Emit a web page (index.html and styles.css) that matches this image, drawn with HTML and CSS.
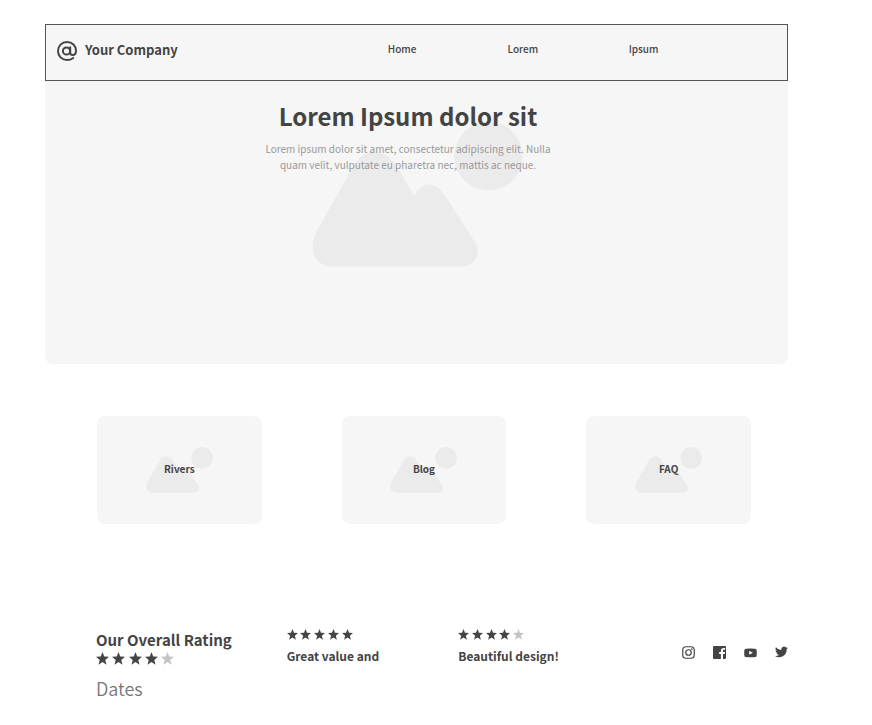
FILE: index.html
```html
<!DOCTYPE html>
<html lang="en">
<head>
<meta charset="utf-8">
<title>Your Company</title>
<link rel="stylesheet" href="styles.css">
</head>
<body>
<svg class="sprite" aria-hidden="true">
  <symbol id="landscape" viewBox="0 0 210 144">
    <circle cx="176" cy="34" r="34"/>
    <path d="M4 111 39 49C45 38 50 30 62 30C74 30 79 35 86 46L102 73C107 66 110 62 117 62C124 62 128 66 134 75L161 117C165 123 166 127 165 132C163 139 158 143 149 143.500H21C4 143 -3 128 4 111Z"/>
  </symbol>
  <symbol id="star" viewBox="0 0 24 24">
    <path d="M12 0l3.200 8.400 8.800.5-6.900 5.700 2.300 9L12 18.600l-7.400 5 2.300-9L0 8.900l8.800-.5z"/>
  </symbol>
</svg>
<div class="page">
  <section class="hero">
    <svg class="picture picture-large" aria-hidden="true"><use href="#landscape"/></svg>
    <header class="header">
      <a class="brand" href="#">
        <svg class="brand-icon" viewBox="0 0 20 20" aria-hidden="true">
          <circle cx="9.500" cy="10" r="3.600"/>
          <path d="M13.200 6.200v5.300c0 1.700 1 2.500 2.400 2.500 2 0 3.400-1.700 3.400-4.300C19 4.700 15.200 1 10 1S1 4.900 1 10s3.900 9 9 9c2.400 0 4.500-.7 6.200-2.100"/>
        </svg>
        <span>Your Company</span>
      </a>
      <nav class="nav">
        <a href="#">Home</a>
        <a href="#">Lorem</a>
        <a href="#">Ipsum</a>
      </nav>
    </header>
    <div class="intro">
      <h1>Lorem Ipsum dolor sit</h1>
      <p>Lorem ipsum dolor sit amet, consectetur adipiscing elit. Nulla<br>quam velit, vulputate eu pharetra nec, mattis ac neque.</p>
    </div>
  </section>

  <section class="cards">
    <a class="card" href="#"><svg class="picture picture-small" aria-hidden="true"><use href="#landscape"/></svg><span>Rivers</span></a>
    <a class="card" href="#"><svg class="picture picture-small" aria-hidden="true"><use href="#landscape"/></svg><span>Blog</span></a>
    <a class="card" href="#"><svg class="picture picture-small" aria-hidden="true"><use href="#landscape"/></svg><span>FAQ</span></a>
  </section>

  <footer class="footer">
    <div class="overall">
      <h2>Our Overall Rating</h2>
      <div class="stars stars-large" role="img" aria-label="4 out of 5 stars">
        <svg><use href="#star"/></svg><svg><use href="#star"/></svg><svg><use href="#star"/></svg><svg><use href="#star"/></svg><svg class="off"><use href="#star"/></svg>
      </div>
      <p class="dates">Dates</p>
    </div>
    <div class="review">
      <div class="stars" role="img" aria-label="5 out of 5 stars">
        <svg><use href="#star"/></svg><svg><use href="#star"/></svg><svg><use href="#star"/></svg><svg><use href="#star"/></svg><svg><use href="#star"/></svg>
      </div>
      <h3>Great value and</h3>
    </div>
    <div class="review">
      <div class="stars" role="img" aria-label="4 out of 5 stars">
        <svg><use href="#star"/></svg><svg><use href="#star"/></svg><svg><use href="#star"/></svg><svg><use href="#star"/></svg><svg class="off"><use href="#star"/></svg>
      </div>
      <h3>Beautiful design!</h3>
    </div>
    <div class="social">
      <a href="#" aria-label="Instagram"><svg viewBox="0 0 26 26"><rect x="1.500" y="1.500" width="23" height="23" rx="6.500" fill="none" stroke="currentColor" stroke-width="2.400"/><circle cx="13" cy="13" r="5.500" fill="none" stroke="currentColor" stroke-width="2.400"/><circle cx="19.700" cy="6.300" r="1.600"/></svg></a>
      <a href="#" aria-label="Facebook"><svg viewBox="0 0 26 26"><path d="M2 0h22a2 2 0 0 1 2 2v22a2 2 0 0 1-2 2h-4V16h3.500l.5-4h-4V9.500c0-1.200.4-2 2-2h2.200V4c-.4 0-1.700-.2-3.200-.2-3.100 0-5.200 1.900-5.200 5.400V12h-3.500v4h3.500v10H2a2 2 0 0 1-2-2V2a2 2 0 0 1 2-2z"/></svg></a>
      <a href="#" aria-label="YouTube"><svg viewBox="0 0 26 26"><path fill-rule="evenodd" d="M4 5.300q9-1 18 0c2 .2 3 1.300 3.300 3.300q.6 5.400 0 10.200c-.3 2-1.300 3-3.300 3.200q-9 .9-18 0c-2-.2-3-1.200-3.300-3.200q-.6-5 0-10.200C1 6.600 2 5.500 4 5.300zM10.500 9.500v8l7-4z"/></svg></a>
      <a href="#" aria-label="Twitter"><svg viewBox="0 1 24 24"><path d="M24 4.600a10 10 0 0 1-2.800.8 4.900 4.900 0 0 0 2.100-2.700 10 10 0 0 1-3.100 1.200 4.900 4.900 0 0 0-8.400 4.500A14 14 0 0 1 1.700 3.200a4.900 4.900 0 0 0 1.500 6.500 4.900 4.900 0 0 1-2.200-.6 4.900 4.900 0 0 0 3.900 4.900 4.900 4.900 0 0 1-2.200.1 4.900 4.900 0 0 0 4.600 3.400A9.900 9.900 0 0 1 0 19.500 14 14 0 0 0 21.500 7.100 10 10 0 0 0 24 4.600z"/></svg></a>
    </div>
  </footer>
</div>
</body>
</html>
```
FILE: styles.css
```css
* {
  box-sizing: border-box;
}

body {
  margin: 0;
  background: #fff;
  color: #444;
  font-family: "Noto Sans CJK SC", "Noto Sans", sans-serif;
  font-size: 10px;
  line-height: 16px;
}

h1, h2, h3, p {
  margin: 0;
}

a {
  color: inherit;
  text-decoration: none;
}

svg {
  display: block;
  fill: currentColor;
}

.sprite {
  position: absolute;
  width: 0;
  height: 0;
}

.page {
  padding: 24px 84px 0 45px;
}

.hero {
  position: relative;
  min-height: 340px;
  background: #f6f6f6;
  border-radius: 0 0 8px 8px;
}

.picture {
  position: absolute;
  inset: 0;
  margin: auto;
  color: #ebebeb;
}

.picture-large {
  width: 212px;
  height: 145px;
}

.picture-small {
  width: 67px;
  height: 46px;
}

.header {
  position: relative;
  display: flex;
  align-items: flex-start;
  justify-content: space-between;
  min-height: 57px;
  padding: 16px 83px 16px 11px;
  border: 1px solid #555;
}

.brand {
  display: flex;
  align-items: center;
  gap: 8px;
  font-size: 13px;
  font-weight: 700;
}

.brand span {
  padding-bottom: 2px;
}

.brand-icon {
  width: 20px;
  height: 20px;
  fill: none;
  stroke: currentColor;
  stroke-width: 2;
  stroke-linecap: round;
}

.nav {
  display: grid;
  grid-template-columns: repeat(3, 1fr);
  flex: 0 0 56%;
  font-weight: 500;
  text-align: center;
}

.intro {
  position: relative;
  padding: 19px 17px 0 0;
  text-align: center;
}

.intro h1 {
  font-size: 24px;
  line-height: 32px;
}

.intro p {
  padding-top: 9px;
  color: #999;
}

.cards {
  display: grid;
  grid-template-columns: repeat(3, 1fr);
  gap: 80px;
  padding: 52px 37px 0 52px;
}

.card {
  position: relative;
  display: flex;
  align-items: center;
  justify-content: center;
  height: 108px;
  border-radius: 8px;
  background: #f6f6f6;
  font-weight: 700;
}

.card span {
  position: relative;
  padding-bottom: 2px;
}

.footer {
  display: grid;
  grid-template-columns: 190fr 171fr 223fr auto;
  align-items: start;
  padding: 104px 0 0 51px;
}

.overall h2 {
  font-size: 15px;
  line-height: 24px;
}

.dates {
  padding-top: 7px;
  color: #777;
  font-size: 18px;
  font-weight: 350;
  line-height: 32px;
}

.stars {
  display: flex;
  justify-content: space-between;
  width: 66px;
}

.stars svg {
  width: 11px;
  height: 11px;
}

.stars-large {
  width: 78px;
}

.stars-large svg {
  width: 13px;
  height: 13px;
}

.stars .off {
  color: #c4c4c4;
}

.review .stars {
  margin-top: 1px;
}

.review h3 {
  padding-top: 8px;
  font-size: 12px;
  line-height: 16px;
}

.social {
  display: flex;
  gap: 18px;
  padding-top: 18px;
}

.social svg {
  width: 13px;
  height: 13px;
}
```
